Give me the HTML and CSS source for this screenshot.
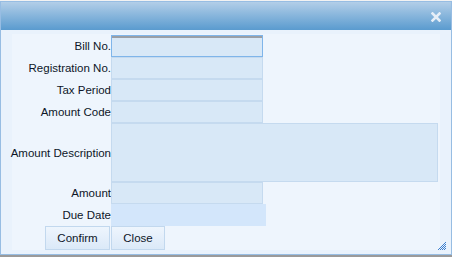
FILE: index.html
```html
<!DOCTYPE html>
<html lang="en">
<head>
  <meta charset="UTF-8">
  <title>Bill</title>
  <link rel="stylesheet" href="styles.css">
</head>
<body>

  <div class="dialog">
    <div class="dialog-header">
      <svg class="close-icon" width="10" height="10" viewBox="0 0 10 10">
        <path d="M1.5 1.5 L8.5 8.5 M8.5 1.5 L1.5 8.5" stroke="#e6eef7" stroke-width="2.6" stroke-linecap="square"/>
      </svg>
    </div>

    <div class="dialog-body">
      <div class="form">
        <label>Bill No.</label>
        <input type="text" class="field focused">

        <label>Registration No.</label>
        <input type="text" class="field">

        <label>Tax Period</label>
        <input type="text" class="field">

        <label>Amount Code</label>
        <input type="text" class="field">

        <label>Amount Description</label>
        <textarea class="field wide"></textarea>

        <label>Amount</label>
        <input type="text" class="field">

        <label>Due Date</label>
        <input type="text" class="field date">

        <div class="buttons">
          <button>Confirm</button>
          <button>Close</button>
        </div>
      </div>
      <svg class="grip" width="8" height="8" viewBox="0 0 8 8">
        <g fill="#3b7fd0">
          <rect x="7" y="0" width="1" height="1"/>
          <rect x="6" y="1" width="1" height="1"/>
          <rect x="5" y="2" width="1" height="1"/><rect x="7" y="2" width="1" height="1"/>
          <rect x="4" y="3" width="1" height="1"/><rect x="6" y="3" width="1" height="1"/>
          <rect x="3" y="4" width="1" height="1"/><rect x="5" y="4" width="1" height="1"/><rect x="7" y="4" width="1" height="1"/>
          <rect x="2" y="5" width="1" height="1"/><rect x="4" y="5" width="1" height="1"/><rect x="6" y="5" width="1" height="1"/>
          <rect x="1" y="6" width="1" height="1"/><rect x="3" y="6" width="1" height="1"/><rect x="5" y="6" width="1" height="1"/><rect x="7" y="6" width="1" height="1"/>
          <rect x="0" y="7" width="1" height="1"/><rect x="2" y="7" width="1" height="1"/><rect x="4" y="7" width="1" height="1"/><rect x="6" y="7" width="1" height="1"/>
        </g>
      </svg>
    </div>
  </div>

</body>
</html>
```

FILE: styles.css
```css
html {
  background: #9a9a9a;
}

body {
  margin: 0;
  background: #f2f2f2;
  font-family: Arial, "Liberation Sans", sans-serif;
  font-size: 11.5px;
  color: #0d1628;
  height: 255px;
}

.dialog {
  margin-top: 1px;
  width: 450px;
  border: 1px solid #97bde3;
  background: #e9f2fc;
}

.dialog-header {
  height: 28px;
  background: linear-gradient(#b2cee8, #5a9bcf);
  display: flex;
  align-items: center;
  justify-content: flex-end;
}

.close-icon {
  margin-right: 10px;
  margin-top: 2px;
}

.dialog-body {
  position: relative;
  padding: 4px 11px 4px 11px;
}

.form {
  background: #eef5fd;
  padding: 1px 0 0 0;
  display: grid;
  grid-template-columns: 99px auto;
  justify-content: start;
  align-items: center;
}

.form label {
  display: flex;
  justify-content: flex-end;
  white-space: nowrap;
}

.field {
  box-sizing: border-box;
  height: 22px;
  width: 152px;
  margin: 0;
  border: 1px solid #c5daef;
  background: #d8e8f7;
  font-family: inherit;
  font-size: 12px;
  outline: none;
}

.field.focused {
  border: 1px solid #7fb5ea;
  box-shadow: inset 0 2px 0 #9a9fa6;
}

.field.wide {
  width: 327px;
  height: 59px;
  resize: none;
}

.field.date {
  width: 155px;
  border-color: #d3e6fb;
  background: #d3e6fb;
}

.buttons {
  grid-column: 1 / 3;
  display: flex;
  gap: 1px;
  padding-left: 33px;
}

.buttons button {
  height: 24px;
  border: 1px solid #c2d8ee;
  background: linear-gradient(#eef5fd, #dbe9f8);
  font-family: inherit;
  font-size: 11.5px;
  color: #0d1628;
  padding: 0;
  cursor: pointer;
}

.buttons button:first-child {
  width: 65px;
}

.buttons button:last-child {
  width: 54px;
}

.grip {
  position: absolute;
  right: 5px;
  bottom: 4px;
}
```
